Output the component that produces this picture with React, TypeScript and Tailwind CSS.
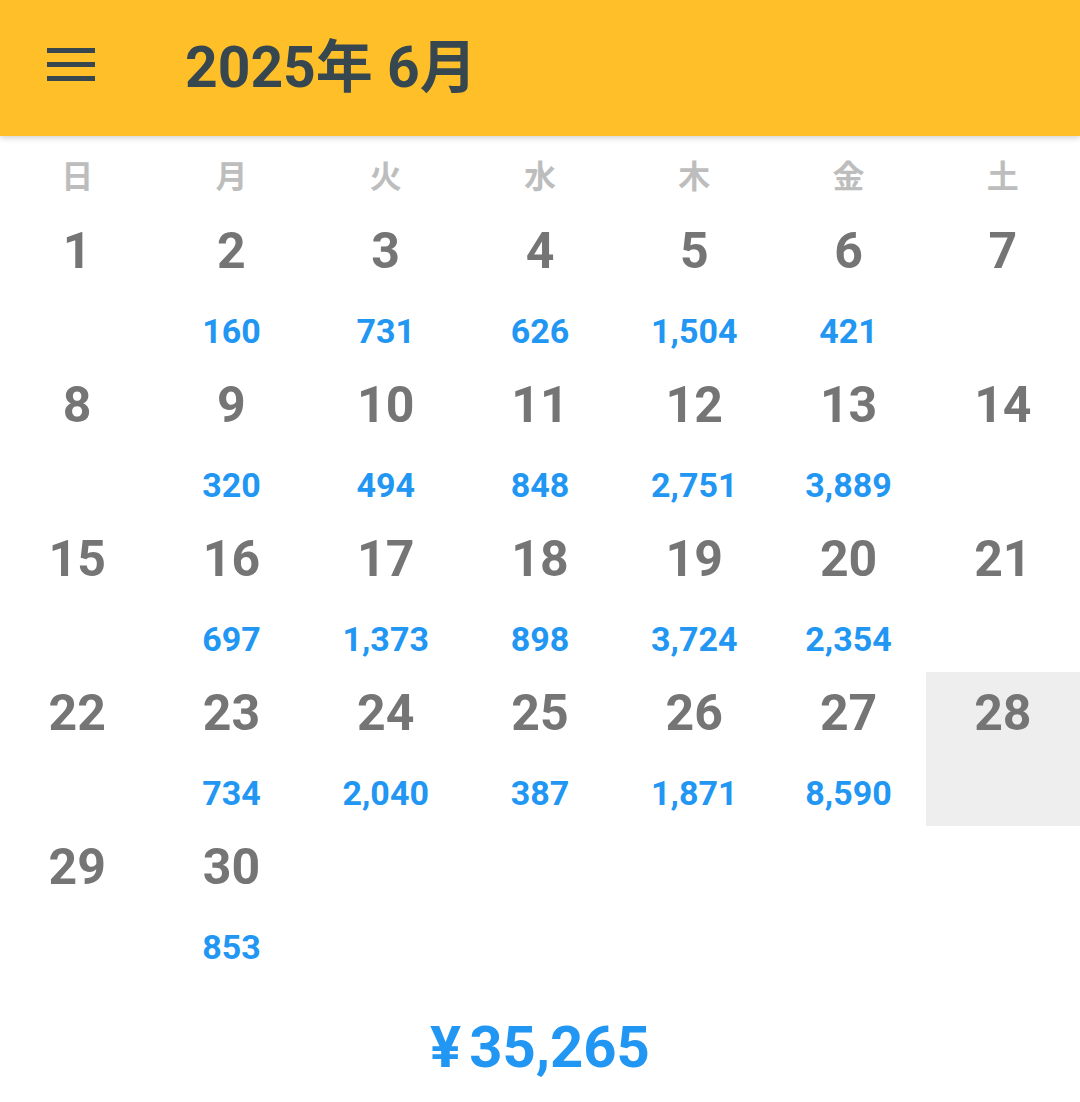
import React from "react";

const amounts: Record<number, string> = {
  2: "160", 3: "731", 4: "626", 5: "1,504", 6: "421",
  9: "320", 10: "494", 11: "848", 12: "2,751", 13: "3,889",
  16: "697", 17: "1,373", 18: "898", 19: "3,724", 20: "2,354",
  23: "734", 24: "2,040", 25: "387", 26: "1,871", 27: "8,590",
  30: "853",
};

const week = ["日", "月", "火", "水", "木", "金", "土"];

export default function App() {
  const days = Array.from({ length: 30 }, (_, i) => i + 1);
  return (
    <div
      className="w-[1080px] h-[1102px] bg-white overflow-hidden flex flex-col"
      style={{ fontFamily: "Roboto, 'Noto Sans CJK JP', sans-serif" }}
    >
      <header className="h-[136px] bg-[#FFBF29] flex items-center shadow-[0_2px_6px_rgba(0,0,0,0.18)] relative z-10 shrink-0">
        <div className="ml-[47px] w-[48px] flex flex-col gap-[9px] mt-[-8px]">
          <div className="h-[5px] bg-[#37474F]" />
          <div className="h-[5px] bg-[#37474F]" />
          <div className="h-[5px] bg-[#37474F]" />
        </div>
        <div className="ml-[90px] text-[57px] font-bold text-[#37474F] leading-none mt-[-2px]">
          2025年 6月
        </div>
      </header>
      <div className="grid grid-cols-7 h-[74px] items-center shrink-0">
        {week.map((w) => (
          <div key={w} className="text-center text-[32px] font-bold text-[#BDBDBD] leading-none mt-[8px]">
            {w}
          </div>
        ))}
      </div>
      <div className="grid grid-cols-7 auto-rows-[154px]">
        {days.map((d) => (
          <div
            key={d}
            className={`flex flex-col items-center ${d === 28 ? "bg-[#EEEEEE]" : ""}`}
          >
            <div className="mt-[19px] h-[44px] flex items-center text-[50px] font-bold text-[#757575] leading-none">
              {d}
            </div>
            <div className="mt-[46px] h-[24px] flex items-center text-[34px] font-bold text-[#2196F3] leading-none">
              {amounts[d] ?? ""}
            </div>
          </div>
        ))}
      </div>
      <div className="flex-1 flex justify-center items-center pt-[12px]">
        <div className="text-[58px] font-bold text-[#2196F3] leading-none flex">
          <span className="mr-[8px]">¥</span>
          <span>35,265</span>
        </div>
      </div>
    </div>
  );
}
